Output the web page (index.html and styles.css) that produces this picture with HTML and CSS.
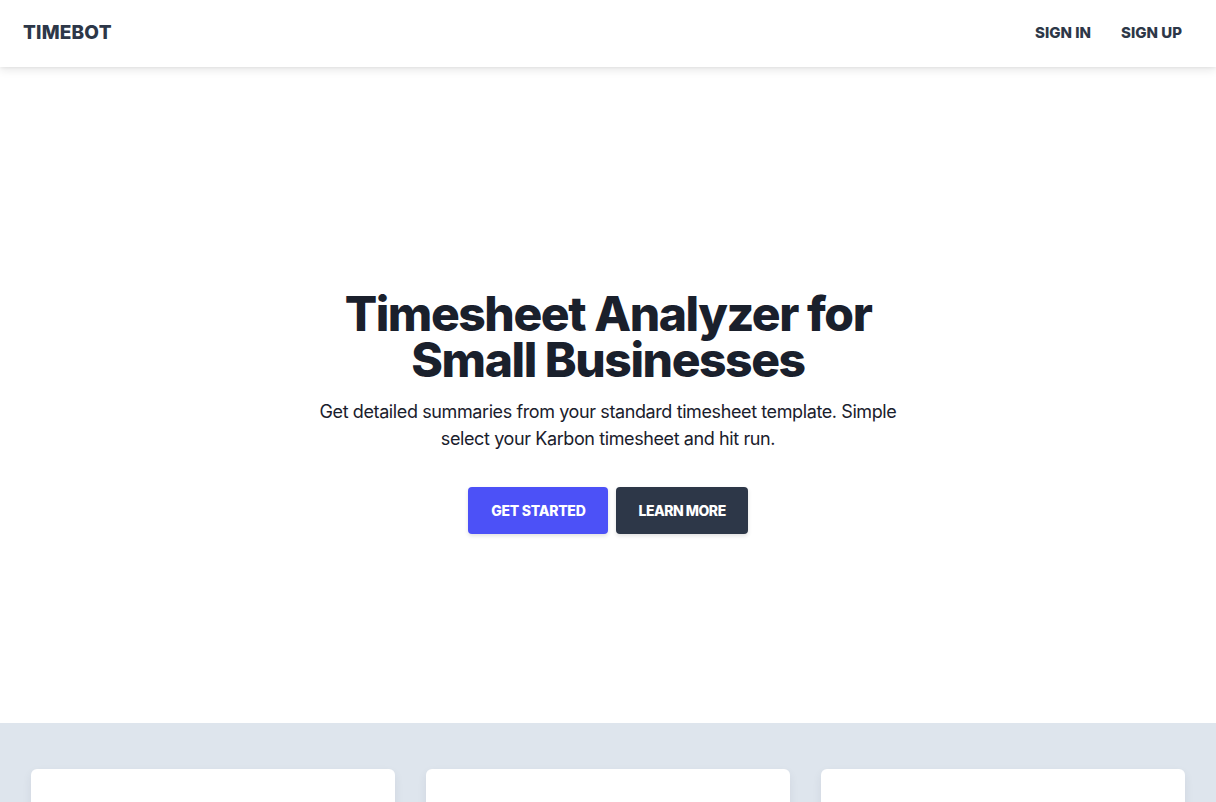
FILE: index.html
```html
<!DOCTYPE html>
<html lang="en">
<head>
<meta charset="utf-8">
<title>Timebot</title>
<link rel="stylesheet" href="styles.css">
</head>
<body>
<header class="topbar">
  <a class="logo" href="#">TIMEBOT</a>
  <nav class="nav">
    <a class="nav-link" href="#">SIGN IN</a>
    <a class="nav-link" href="#">SIGN UP</a>
  </nav>
</header>
<main>
  <section class="hero">
    <h1 class="hero-title">Timesheet Analyzer for<br>Small Businesses</h1>
    <p class="hero-text">Get detailed summaries from your standard timesheet template. Simple select your Karbon timesheet and hit run.</p>
    <div class="actions">
      <a class="btn btn-primary" href="#">GET STARTED</a>
      <a class="btn btn-dark" href="#">LEARN MORE</a>
    </div>
  </section>
  <section class="features">
    <div class="card"></div>
    <div class="card"></div>
    <div class="card"></div>
  </section>
</main>
</body>
</html>
```
FILE: styles.css
```css
* { box-sizing: border-box; }
html, body { margin: 0; padding: 0; }
body {
  font-family: Inter, "Noto Sans", "Liberation Sans", sans-serif;
  color: #1a202c;
  background: #ffffff;
}
a { text-decoration: none; }

.topbar {
  position: relative;
  z-index: 2;
  height: 67px;
  display: flex;
  align-items: center;
  justify-content: space-between;
  padding: 0 22px 2px 23px;
  background: #ffffff;
  box-shadow: 0 4px 8px rgba(0, 0, 0, 0.08), 0 1px 3px rgba(0, 0, 0, 0.06);
}
.logo {
  font-size: 19px;
  font-weight: 800;
  color: #2d3748;
  letter-spacing: 0.01em;
}
.nav {
  display: flex;
  gap: 6px;
}
.nav-link {
  padding: 8px 12px;
  font-size: 15px;
  font-weight: 800;
  letter-spacing: 0;
  color: #2d3748;
}

.hero {
  height: 656px;
  display: flex;
  flex-direction: column;
  align-items: center;
  padding-top: 224px;
  text-align: center;
}
.hero-title {
  margin: 0;
  font-size: 48px;
  line-height: 46px;
  font-weight: 800;
  letter-spacing: -0.03em;
  color: #1a202c;
}
.hero-text {
  margin: 15px 0 0;
  max-width: 600px;
  font-size: 18px;
  line-height: 27px;
  letter-spacing: -0.022em;
  color: #1a202c;
}
.actions {
  display: flex;
  gap: 8px;
  margin-top: 35px;
}
.btn {
  display: flex;
  align-items: center;
  height: 47px;
  padding: 0 23px;
  border-radius: 4px;
  font-size: 14px;
  font-weight: 800;
  letter-spacing: -0.02em;
  color: #ffffff;
  box-shadow: 0 2px 4px rgba(0, 0, 0, 0.12);
}
.btn-primary { background: #4c51f7; }
.btn-dark {
  background: #2d3748;
  padding: 0 22px;
  letter-spacing: -0.035em;
}

.features {
  background: #dee5ed;
  display: grid;
  grid-template-columns: repeat(3, 1fr);
  gap: 31px;
  padding: 46px 31px 40px;
}
.card {
  height: 240px;
  background: #ffffff;
  border-radius: 6px;
  box-shadow: 0 4px 10px rgba(45, 55, 72, 0.08);
}
```
